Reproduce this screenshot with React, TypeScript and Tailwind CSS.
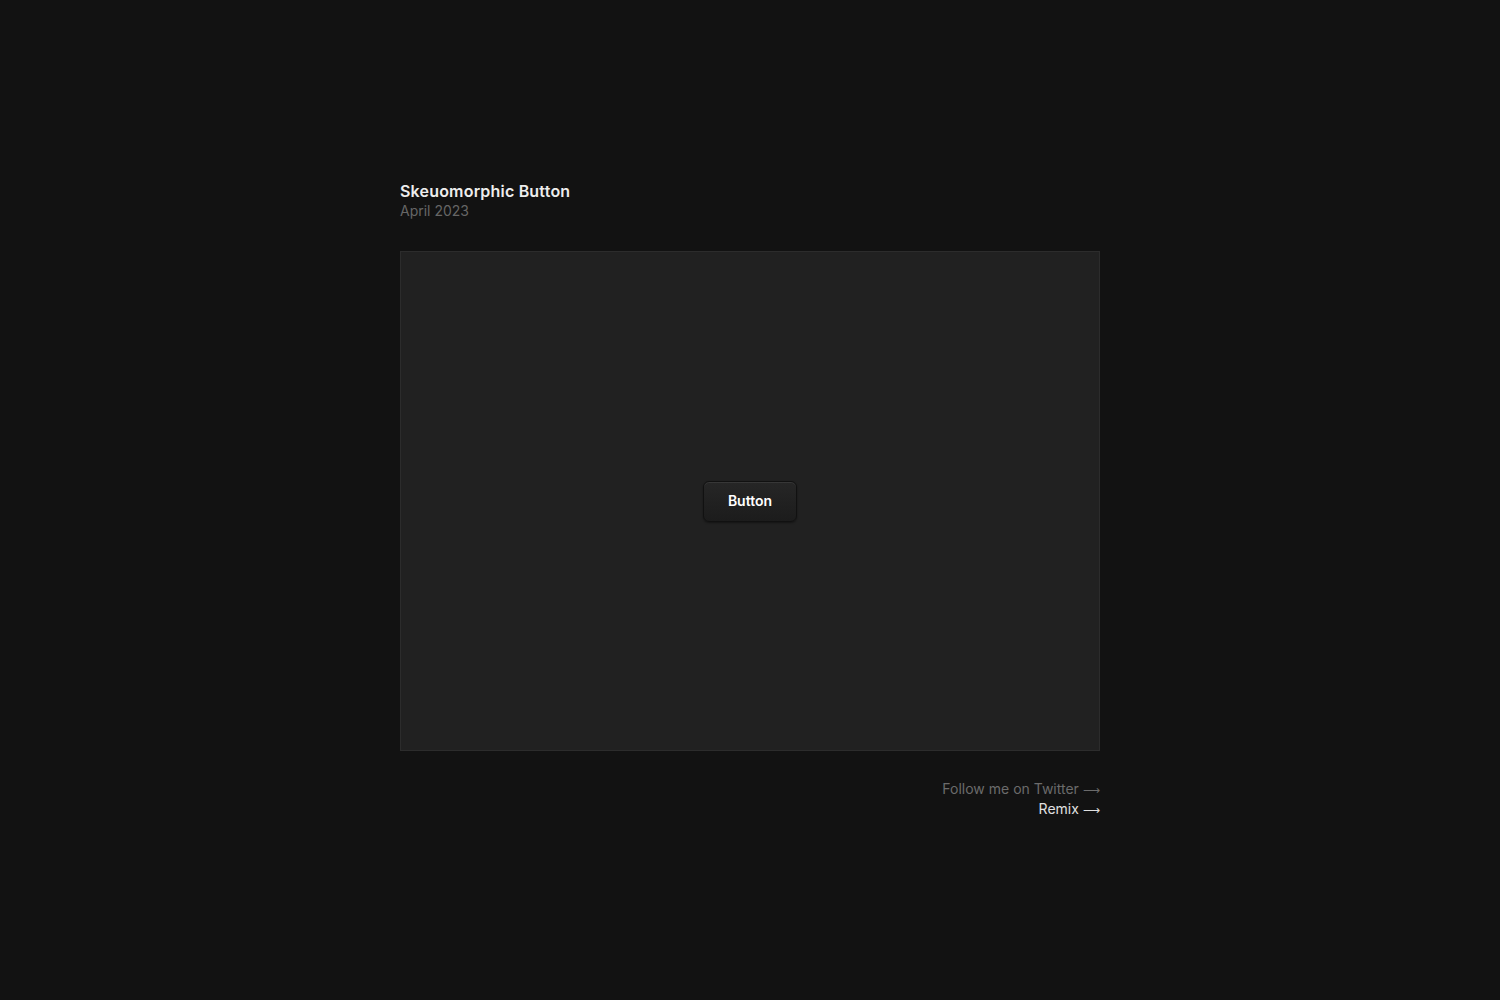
import React from "react";

export default function App() {
  return (
    <div
      className="min-h-screen w-full bg-[#121212] text-white"
      style={{ fontFamily: "Inter, 'Noto Sans', sans-serif" }}
    >
      <div className="mx-auto w-[700px] pt-[181px]">
        {/* Titulo */}
        <div className="flex flex-col">
          <h1 className="text-[16px] leading-[20px] font-semibold tracking-[0.012em] text-[#ededed]">
            Skeuomorphic Button
          </h1>
          <span className="text-[14px] leading-[20px] text-[#666666]">April 2023</span>
        </div>

        {/* Canvas */}
        <div className="mt-[30px] flex h-[500px] w-[700px] items-center justify-center border border-[#2c2c2c] bg-[#212121]">
          <button className="flex h-[41px] w-[94px] items-center justify-center rounded-[6px] border border-[#111111] bg-gradient-to-b from-[#262626] to-[#1c1c1c] pb-[2px] text-[14px] font-semibold text-white shadow-[inset_0_1px_0_rgba(255,255,255,0.08),0_1px_2px_rgba(0,0,0,0.4)]">
            Button
          </button>
        </div>

        {/* Footer */}
        <div className="mt-[28px] flex flex-col items-end text-[14px] leading-[20px]">
          <a className="h-[20px] text-[#6b6b6b]" href="#">
            Follow me on Twitter{" "}
            <span className="text-[12px] leading-none" style={{ fontFamily: "'DejaVu Sans', sans-serif" }}>⟶</span>
          </a>
          <a className="h-[20px] text-[#e0e0e0]" href="#">
            Remix{" "}
            <span className="text-[12px] leading-none" style={{ fontFamily: "'DejaVu Sans', sans-serif" }}>⟶</span>
          </a>
        </div>
      </div>
    </div>
  );
}
